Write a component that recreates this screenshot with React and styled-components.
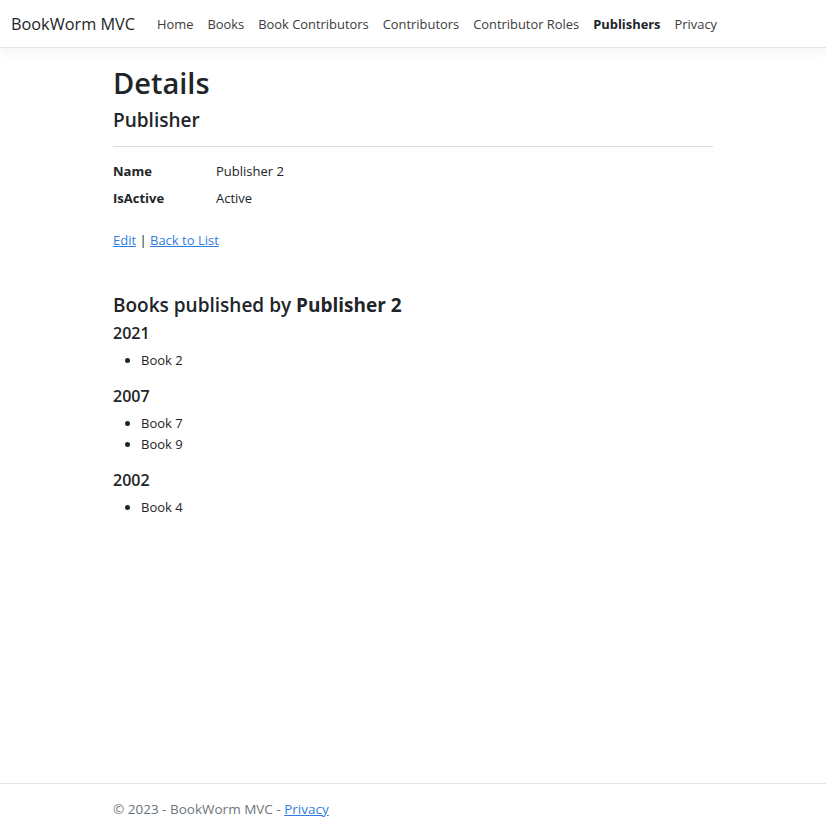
import React from "react";
import styled, { createGlobalStyle } from "styled-components";

const GlobalStyle = createGlobalStyle`
  html, body {
    margin: 0;
    padding: 0;
  }
  body {
    font-family: "Open Sans", "Noto Sans", sans-serif;
    font-size: 13px;
    line-height: 1.5;
    color: #212529;
    background: #fff;
  }
`;

const Page = styled.div`
  min-height: 100vh;
  display: flex;
  flex-direction: column;
`;

const Navbar = styled.nav`
  height: 48px;
  display: flex;
  align-items: center;
  padding: 2px 11px 0;
  box-sizing: border-box;
  background: #fff;
  border-bottom: 1px solid #e5e5e5;
  box-shadow: 0 4px 12px rgba(0, 0, 0, 0.05);
  margin-bottom: 16px;
`;

const Brand = styled.a`
  font-size: 16.3px;
  color: #212529;
  text-decoration: none;
  margin-right: 15px;
  white-space: nowrap;
`;

const NavList = styled.ul`
  display: flex;
  list-style: none;
  margin: 0;
  padding: 0;
`;

const NavLink = styled.a`
  display: block;
  padding: 0 7px;
  font-size: 12.9px;
  color: ${p => (p.$active ? "#212529" : "#3b3b3b")};
  font-weight: ${p => (p.$active ? 700 : 400)};
  text-decoration: none;
  white-space: nowrap;
`;

const Container = styled.div`
  width: 100%;
  max-width: 624px;
  margin: 0 auto;
  padding: 0 12px;
  box-sizing: border-box;
`;

const Title = styled.h1`
  font-size: 29px;
  font-weight: 600;
  line-height: 38px;
  margin: 0 0 6px;
`;

const SubTitle = styled.h4`
  font-size: 19px;
  font-weight: 600;
  line-height: 24px;
  margin: ${p => (p.$spaced ? "42px 0 6px" : "0")};

  strong {
    font-weight: 700;
  }
`;

const Rule = styled.hr`
  border: 0;
  border-top: 1px solid #dcdcdc;
  margin: 14px 0 14px;
`;

const DetailList = styled.dl`
  display: grid;
  grid-template-columns: 103px 1fr;
  margin: 0 0 15px;
`;

const Term = styled.dt`
  font-weight: 700;
  line-height: 21px;
  margin-bottom: 6px;
`;

const Desc = styled.dd`
  margin: 0 0 6px;
  line-height: 21px;
`;

const Actions = styled.div`
  line-height: 21px;
`;

const Link = styled.a`
  color: #2f7de1;
  text-decoration: underline;
`;

const Year = styled.h5`
  font-size: 16px;
  font-weight: 600;
  line-height: 21px;
  margin: 0 0 6px;
`;

const BookList = styled.ul`
  margin: 0 0 15px;
  padding-left: 28px;

  li {
    line-height: 21px;
  }
`;

const Footer = styled.footer`
  margin-top: auto;
  border-top: 1px solid #e5e5e5;
  line-height: 51px;
  font-size: 13.5px;
  color: #6c757d;
  white-space: nowrap;
`;

const navItems = [
  "Home",
  "Books",
  "Book Contributors",
  "Contributors",
  "Contributor Roles",
  "Publishers",
  "Privacy",
];

const booksByYear = [
  { year: 2021, books: ["Book 2"] },
  { year: 2007, books: ["Book 7", "Book 9"] },
  { year: 2002, books: ["Book 4"] },
];

export default function App() {
  return (
    <Page>
      <GlobalStyle />
      <Navbar>
        <Brand href="#">BookWorm MVC</Brand>
        <NavList>
          {navItems.map(item => (
            <li key={item}>
              <NavLink href="#" $active={item === "Publishers"}>
                {item}
              </NavLink>
            </li>
          ))}
        </NavList>
      </Navbar>
      <Container>
        <Title>Details</Title>
        <SubTitle>Publisher</SubTitle>
        <Rule />
        <DetailList>
          <Term>Name</Term>
          <Desc>Publisher 2</Desc>
          <Term>IsActive</Term>
          <Desc>Active</Desc>
        </DetailList>
        <Actions>
          <Link href="#">Edit</Link> | <Link href="#">Back to List</Link>
        </Actions>
        <SubTitle $spaced>
          Books published by <strong>Publisher 2</strong>
        </SubTitle>
        {booksByYear.map(group => (
          <div key={group.year}>
            <Year>{group.year}</Year>
            <BookList>
              {group.books.map(b => (
                <li key={b}>{b}</li>
              ))}
            </BookList>
          </div>
        ))}
      </Container>
      <Footer>
        <Container>
          © 2023 - BookWorm MVC - <Link href="#">Privacy</Link>
        </Container>
      </Footer>
    </Page>
  );
}
